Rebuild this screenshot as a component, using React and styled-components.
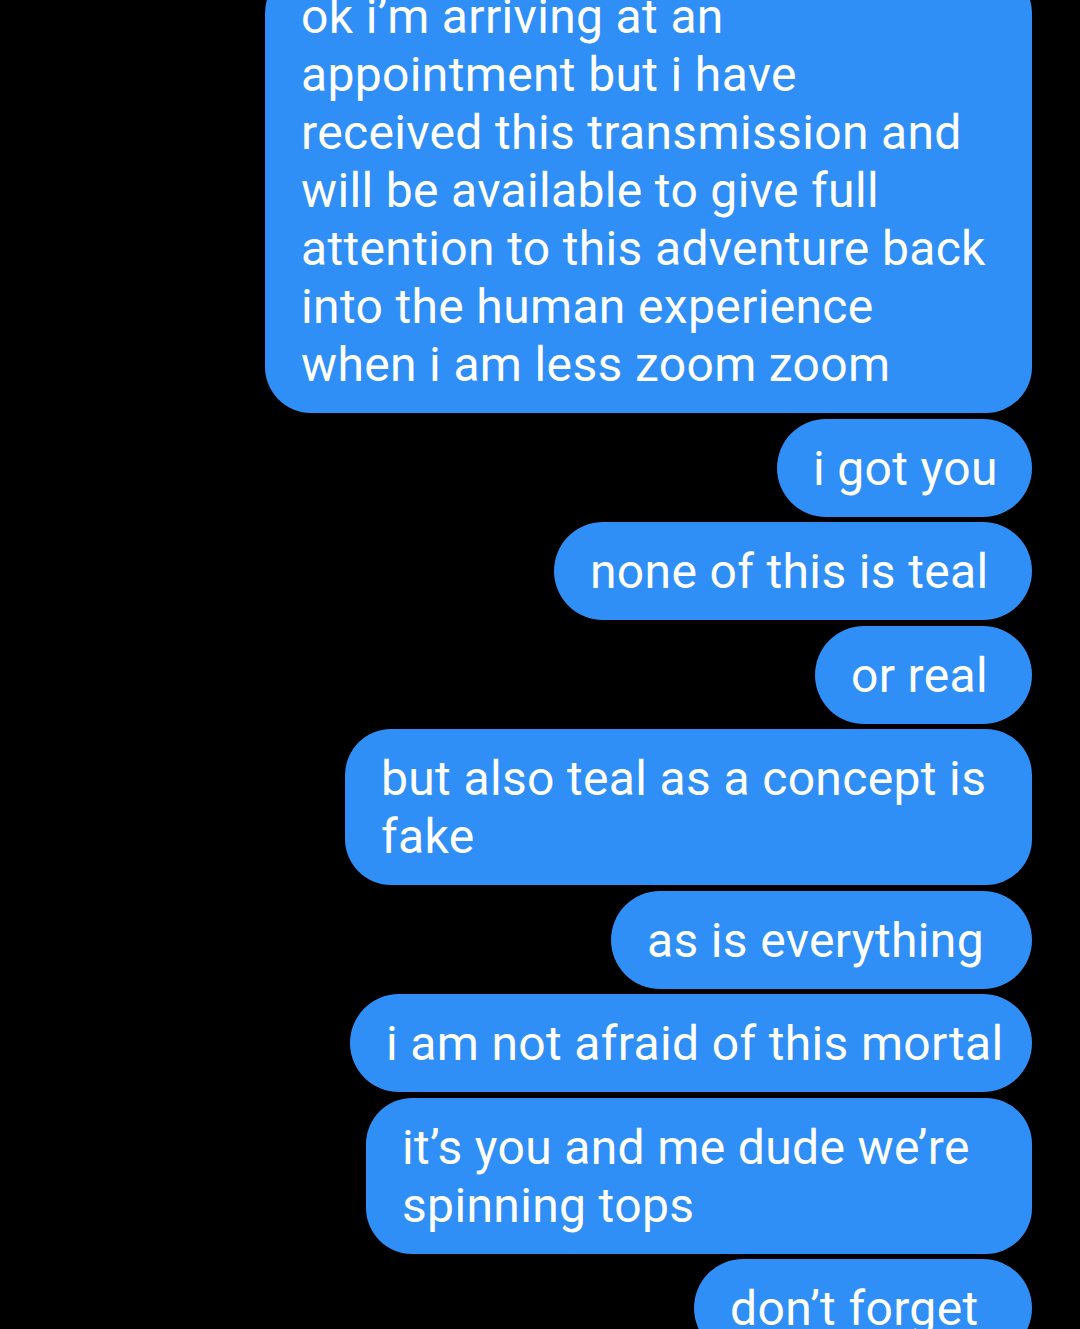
import React from "react";
import styled, { createGlobalStyle } from "styled-components";

const Global = createGlobalStyle`
  html, body { margin: 0; padding: 0; background: #000; }
  body { overflow: hidden; }
`;

const Screen = styled.div`
  width: 1080px;
  height: 1329px;
  background: #000;
  overflow: hidden;
`;

const Thread = styled.div`
  display: flex;
  flex-direction: column;
  align-items: flex-end;
  gap: 5.5px;
  margin-top: -33px;
  padding-right: 48px;
`;

const Bubble = styled.div`
  box-sizing: border-box;
  width: ${(p) => p.$w}px;
  padding: 21px 0 19px 36px;
  background: #2f8ff7;
  color: #fff;
  border-radius: ${(p) => (p.$multi ? "46px" : "49px")};
  font-family: Roboto, "Liberation Sans", sans-serif;
  font-size: 48px;
  line-height: 58px;
  white-space: nowrap;
  letter-spacing: 0.35px;
`;

const Line = styled.div``;

const messages = [
  {
    w: 767,
    lines: [
      "ok i’m arriving at an",
      "appointment but i have",
      "received this transmission and",
      "will be available to give full",
      "attention to this adventure back",
      "into the human experience",
      "when i am less zoom zoom",
    ],
  },
  { w: 255, lines: ["i got you"] },
  { w: 478, lines: ["none of this is teal"] },
  { w: 217, lines: ["or real"] },
  { w: 687, lines: ["but also teal as a concept is", "fake"] },
  { w: 421, lines: ["as is everything"] },
  { w: 682, lines: ["i am not afraid of this mortal"] },
  { w: 666, lines: ["it’s you and me dude we’re", "spinning tops"] },
  { w: 338, lines: ["don’t forget"] },
];

export default function App() {
  return (
    <Screen>
      <Global />
      <Thread>
        {messages.map((m, i) => (
          <Bubble key={i} $w={m.w} $multi={m.lines.length > 1}>
            {m.lines.map((l, j) => (
              <Line key={j}>{l}</Line>
            ))}
          </Bubble>
        ))}
      </Thread>
    </Screen>
  );
}
